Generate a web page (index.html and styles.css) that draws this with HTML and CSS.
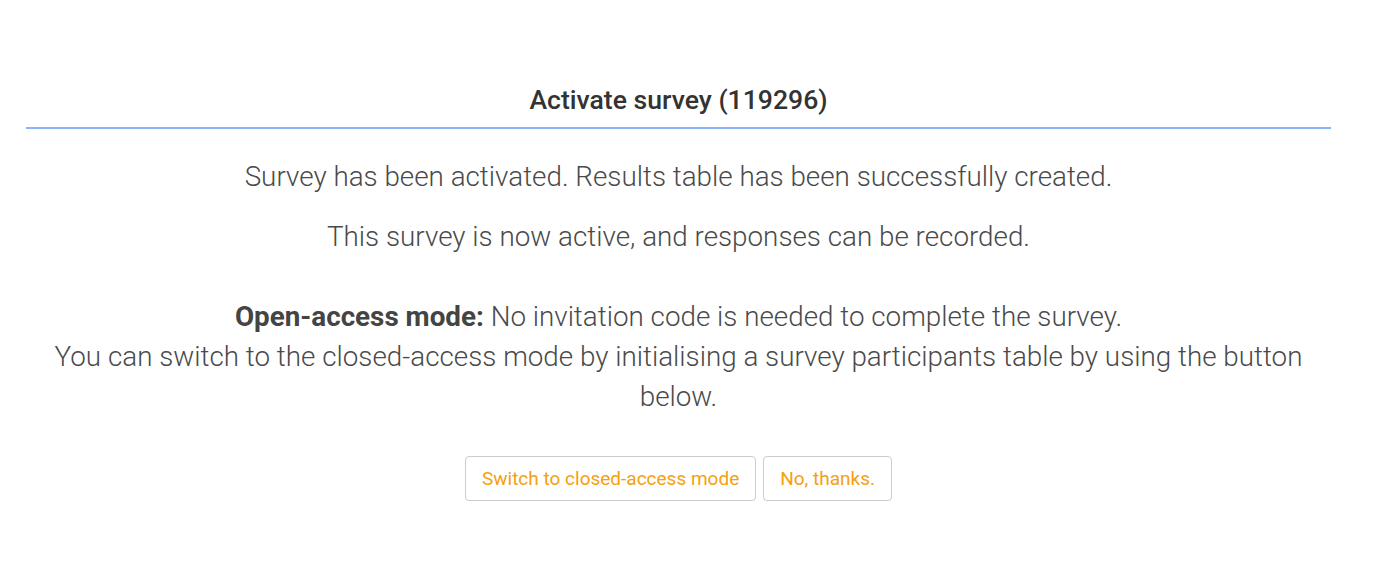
FILE: index.html
```html
<!DOCTYPE html>
<html>
<head>
<meta charset="utf-8">
<link rel="stylesheet" href="styles.css">
</head>
<body>
<div class="wrap">
  <div class="panel">
    <div class="heading">Activate survey (119296)</div>
    <div class="body">
      <p class="lead">Survey has been activated. Results table has been successfully created.</p>
      <p class="lead">This survey is now active, and responses can be recorded.</p>
      <p class="mode"><strong>Open-access mode:</strong> No invitation code is needed to complete the survey.<br>You can switch to the closed-access mode by initialising a survey participants table by using the button below.</p>
      <div class="actions">
        <button class="btn">Switch to closed-access mode</button>
        <button class="btn">No, thanks.</button>
      </div>
    </div>
  </div>
</div>
</body>
</html>
```

FILE: styles.css
```css
html, body {
  margin: 0;
  padding: 0;
  background: #fff;
}
body {
  font-family: Roboto, "Liberation Sans", sans-serif;
  color: #444;
}
.wrap {
  padding: 80px 67px 0 26px;
}
.heading {
  text-align: center;
  font-size: 26.6px;
  font-weight: 500;
  color: #333;
  line-height: 40px;
  padding-bottom: 7px;
  border-bottom: 2px solid #8ab4f8;
}
.body {
  text-align: center;
  padding: 0 20px;
}
.lead {
  font-size: 27.8px;
  font-weight: 300;
  line-height: 40px;
  margin: 28px 0 20px;
  color: #4a4a4a;
}
.lead + .lead {
  margin-top: 20px;
}
.mode {
  font-size: 27.8px;
  font-weight: 300;
  line-height: 40px;
  color: #4a4a4a;
  margin: 40px 0 0;
}
.mode strong {
  font-weight: 700;
  color: #444;
}
.actions {
  display: flex;
  justify-content: center;
  gap: 7px;
  margin-top: 39px;
}
.btn {
  font-family: Roboto, "Liberation Sans", sans-serif;
  font-size: 19px;
  color: #f5a00f;
  background: #fff;
  border: 1px solid #ccc;
  border-radius: 4px;
  height: 45px;
  padding: 0 16px;
}
```
